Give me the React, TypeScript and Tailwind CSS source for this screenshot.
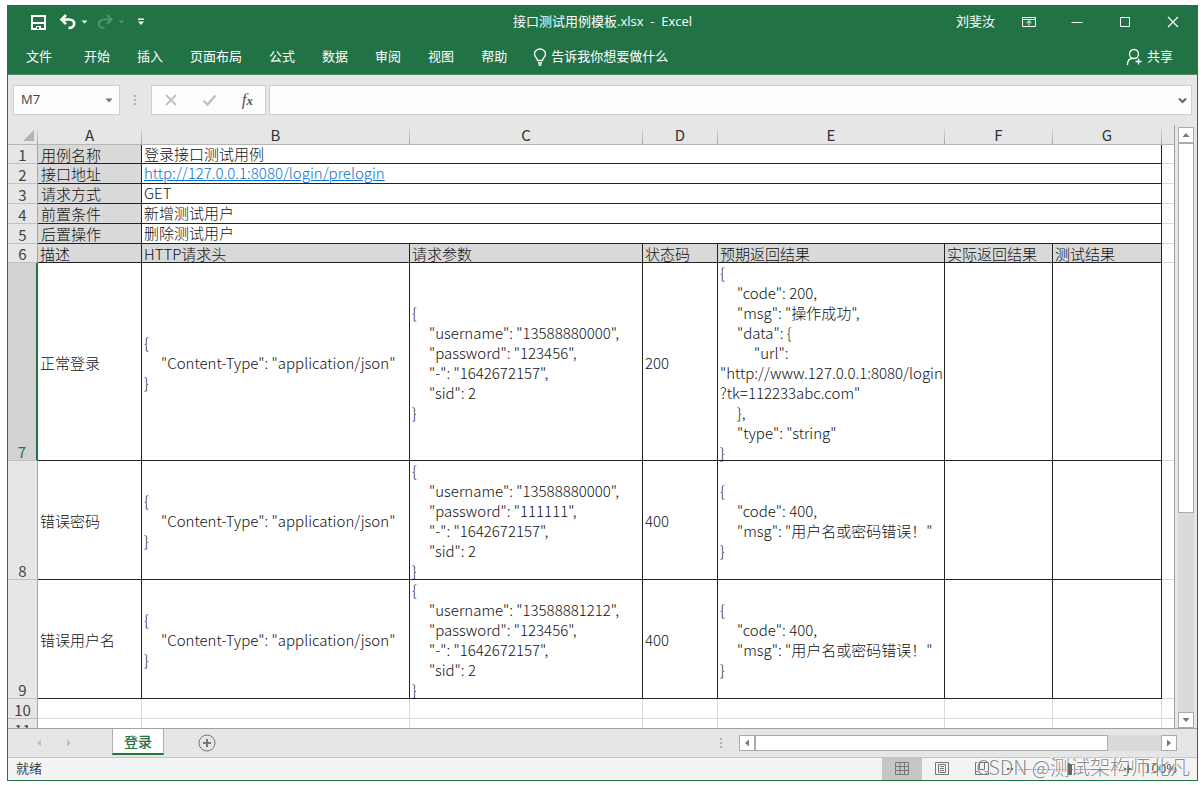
import type { ReactNode } from 'react';

const menus = ['开始', '插入', '页面布局', '公式', '数据', '审阅', '视图', '帮助'];

const columns = ['A', 'B', 'C', 'D', 'E', 'F', 'G'];

const info = [
  { label: '用例名称', value: '登录接口测试用例' },
  { label: '接口地址', value: 'http://127.0.0.1:8080/login/prelogin', link: true },
  { label: '请求方式', value: 'GET' },
  { label: '前置条件', value: '新增测试用户' },
  { label: '后置操作', value: '删除测试用户' },
];

const headings = ['描述', 'HTTP请求头', '请求参数', '状态码', '预期返回结果', '实际返回结果', '测试结果'];

const header = '{\n\t"Content-Type": "application/json"\n}';

const params = (user: string, pwd: string) =>
  `{\n\t"username": "${user}",\n\t"password": "${pwd}",\n\t"-": "1642672157",\n\t"sid": 2\n}`;

const failed = '{\n\t"code": 400,\n\t"msg": "用户名或密码错误！"\n}';

const cases = [
  {
    row: 7,
    height: 'h-[197px]',
    active: true,
    cells: [
      '正常登录',
      header,
      params('13588880000', '123456'),
      '200',
      '{\n\t"code": 200,\n\t"msg": "操作成功",\n\t"data": {\n\t\t"url":\n"http://www.127.0.0.1:8080/login\n?tk=112233abc.com"\n\t},\n\t"type": "string"\n}',
      '',
      '',
    ],
  },
  {
    row: 8,
    height: 'h-[118px]',
    active: false,
    cells: ['错误密码', header, params('13588880000', '111111'), '400', failed, '', ''],
  },
  {
    row: 9,
    height: 'h-[118px]',
    active: false,
    cells: ['错误用户名', header, params('13588881212', '123456'), '400', failed, '', ''],
  },
];

function RowHead({ n, active }: { n: number; active?: boolean }) {
  return (
    <th
      scope="row"
      className={
        active
          ? 'border-r-2 border-b border-r-[#217346] border-b-[#c0c0c0] bg-[#d2d2d2] p-0 text-center align-bottom font-normal text-[#217346]'
          : 'border-r border-b border-r-[#a6a6a6] border-b-[#c0c0c0] bg-[#e6e6e6] p-0 text-center align-bottom font-normal text-[#444]'
      }
    >
      <div className="h-[18px] leading-[20px]">{n}</div>
    </th>
  );
}

function Edge() {
  return <td className="border-b border-[#d9d9d9] p-0" />;
}

function Dots() {
  return (
    <svg width="3" height="13" viewBox="0 0 3 13" fill="#b0b0b0" aria-hidden="true">
      <path d="M0 1h2v2H0zM0 5h2v2H0zM0 9h2v2H0z" />
    </svg>
  );
}

function ScrollButton({ label, d }: { label: string; d: string }) {
  return (
    <button aria-label={label} className="flex size-4 shrink-0 items-center justify-center border border-[#ababab] bg-white">
      <svg width="8" height="8" viewBox="0 0 8 8" fill="#777">
        <path d={d} />
      </svg>
    </button>
  );
}

function WindowButton({ label, children }: { label: string; children: ReactNode }) {
  return (
    <button aria-label={label} className="flex h-8 w-12 items-center justify-center">
      <svg width="16" height="16" viewBox="0 0 16 16" fill="none" stroke="#fff">
        {children}
      </svg>
    </button>
  );
}

function TitleBar() {
  return (
    <div className="grid h-[34px] grid-cols-[1fr_auto_1fr] items-center">
      <div className="flex items-center pl-[22px]">
        <button aria-label="保存">
          <svg width="17" height="17" viewBox="0 0 17 17" fill="none" stroke="#fff" strokeWidth="2">
            <path d="M2 2h13v13H2z" />
            <path d="M2 9h13" />
            <path d="M6 12h5v3H6z" fill="#fff" stroke="none" />
            <path d="M7 13h2v2H7z" fill="#217346" stroke="none" />
          </svg>
        </button>
        <button aria-label="撤消" className="ml-3 flex items-center gap-1">
          <svg width="18" height="16" viewBox="0 0 18 16" fill="none" stroke="#fff" strokeWidth="2.6">
            <path d="M7 1L2.500 5.500L7 10M3 5.500H10C17 5.500 17 14 9.500 14" />
          </svg>
          <svg width="7" height="4" viewBox="0 0 7 4" fill="#fff">
            <path d="M0.500 0.500h6L3.500 3.500z" />
          </svg>
        </button>
        <button aria-label="恢复" className="ml-2 flex items-center gap-1" disabled>
          <svg width="18" height="16" viewBox="0 0 18 16" fill="none" stroke="#4f9170" strokeWidth="2.200">
            <path d="M11 1L15.500 5.500L11 10M15 5.500H8C1 5.500 1 14 8.500 14" />
          </svg>
          <svg width="7" height="4" viewBox="0 0 7 4" fill="#4f9170">
            <path d="M0.500 0.500h6L3.500 3.500z" />
          </svg>
        </button>
        <button aria-label="自定义快速访问工具栏" className="ml-3">
          <svg width="8" height="8" viewBox="0 0 8 8" fill="#fff">
            <path d="M1 0.500h6v1.500H1zM1 3.500h6L4 7z" />
          </svg>
        </button>
      </div>
      <h1 className="text-[13px] whitespace-pre">接口测试用例模板.xlsx  -  Excel</h1>
      <div className="flex items-center justify-end">
        <button className="mr-[10px] text-[13px]">刘斐汝</button>
        <WindowButton label="功能区显示选项">
          <path d="M1.500 3.500h13v9h-13zM1.500 5.500h13M8 11.500V7M5.500 9L8 6.800L10.500 9" />
        </WindowButton>
        <WindowButton label="最小化">
          <path d="M2.500 8.500h11" />
        </WindowButton>
        <WindowButton label="最大化">
          <path d="M3.500 3.500h9v9h-9z" />
        </WindowButton>
        <WindowButton label="关闭">
          <path d="M3 3l10 10M13 3L3 13" strokeWidth="1.200" />
        </WindowButton>
      </div>
    </div>
  );
}

function MenuBar() {
  return (
    <nav className="flex h-9 items-center border-b border-[#4d8f6b] px-[18px] text-[13px]">
      <button className="mr-8">文件</button>
      <div className="flex gap-[27px]">
        {menus.map((m) => (
          <button key={m} className="whitespace-nowrap">
            {m}
          </button>
        ))}
      </div>
      <button className="ml-[26px] flex items-center gap-1 whitespace-nowrap">
        <svg width="14" height="18" viewBox="0 0 14 18" fill="none" stroke="#fff" strokeWidth="1.300">
          <path d="M4.500 12.500C4.500 10 1.500 9 1.500 6a5.500 5 0 0 1 11 0C12.500 9 9.500 10 9.500 12.500zM5 15h4M5.500 17h3" />
        </svg>
        告诉我你想要做什么
      </button>
      <button className="mr-1.5 ml-auto flex items-center gap-1 whitespace-nowrap">
        <svg width="17" height="18" viewBox="0 0 17 18" fill="none" stroke="#fff" strokeWidth="1.300">
          <circle cx="8" cy="6" r="4.500" />
          <path d="M1.500 17C1.500 13 3.500 10.500 6.500 10.500M12.500 10.500v6M9.500 13.500h6" />
        </svg>
        共享
      </button>
    </nav>
  );
}

function FormulaBar() {
  return (
    <div className="flex h-[50px] items-start bg-[#e6e6e6] px-[5px] pt-[10px] text-[#444]">
      <div className="flex h-[30px] w-[107px] items-center border border-[#cfcfcf] bg-[#fdfdfd] pr-1.5 pl-[7px]">
        <input aria-label="名称框" defaultValue="M7" className="w-0 flex-1 bg-transparent text-[13px] outline-none" />
        <button aria-label="名称列表">
          <svg width="8" height="5" viewBox="0 0 8 5" fill="#777">
            <path d="M0.500 0.500h7L4 4.500z" />
          </svg>
        </button>
      </div>
      <div className="flex h-[30px] w-[31px] items-center justify-center">
        <Dots />
      </div>
      <div className="flex h-[30px] w-[115px] items-center justify-between border border-[#cfcfcf] bg-[#fdfdfd] px-3">
        <button aria-label="取消">
          <svg width="14" height="14" viewBox="0 0 14 14" stroke="#c0c0c0" strokeWidth="1.800">
            <path d="M2 2l10 10M12 2L2 12" />
          </svg>
        </button>
        <button aria-label="输入">
          <svg width="15" height="14" viewBox="0 0 15 14" fill="none" stroke="#c0c0c0" strokeWidth="2.400">
            <path d="M1.500 7.500l4 4L13.500 2.500" />
          </svg>
        </button>
        <button aria-label="插入函数" className="font-['Liberation_Serif',serif] text-[17px] leading-5 text-[#555] italic">
          f<span className="text-[13px] font-bold">x</span>
        </button>
      </div>
      <div className="ml-[3px] flex h-[30px] flex-1 items-center border border-[#cfcfcf] bg-[#fdfdfd] pr-1">
        <input aria-label="编辑栏" className="h-full min-w-0 flex-1 bg-transparent px-1 text-[13px] outline-none" />
        <button aria-label="展开编辑栏">
          <svg width="9" height="7" viewBox="0 0 9 7" fill="none" stroke="#666" strokeWidth="2">
            <path d="M1 1.500l3.500 3.500L8 1.500" />
          </svg>
        </button>
      </div>
    </div>
  );
}

function Grid() {
  return (
    <div className="min-w-0 flex-1 overflow-hidden border-r border-[#a0a0a0] bg-white">
      <table className="w-full table-fixed border-separate border-spacing-0 text-left font-['Noto_Sans_CJK_SC',sans-serif] text-[15px] leading-5 font-light text-[#111]">
        <colgroup>
          <col className="w-[30px]" />
          <col className="w-[104px]" />
          <col className="w-[268px]" />
          <col className="w-[233px]" />
          <col className="w-[75px]" />
          <col className="w-[227px]" />
          <col className="w-[108px]" />
          <col className="w-[109px]" />
          <col />
        </colgroup>
        <thead>
          <tr className="bg-[#e6e6e6] text-center text-[#333]">
            <td className="border-b border-[#b5b5b5] p-0">
              <div className="flex h-[19px] justify-end">
                <svg width="14" height="19" viewBox="0 0 14 19" fill="#b4b4b4">
                  <path d="M11 5v11H0z" />
                </svg>
                <span className="h-full w-px bg-linear-to-b from-[#e6e6e6] to-[#a6a6a6]" />
              </div>
            </td>
            {columns.map((c) => (
              <th key={c} scope="col" className="border-b border-[#b5b5b5] p-0 font-normal">
                <div className="flex h-[19px]">
                  <span className="flex-1 leading-5">{c}</span>
                  <span className="h-full w-px bg-linear-to-b from-[#e6e6e6] to-[#a6a6a6]" />
                </div>
              </th>
            ))}
            <td className="border-b border-[#b5b5b5] p-0" />
          </tr>
        </thead>
        <tbody>
          {info.map((item, i) => (
            <tr key={item.label}>
              <RowHead n={i + 1} />
              <td className="border-r border-b border-[#222] bg-[#d9d9d9] p-0 pl-[3px]">
                <div className={i === 0 ? 'h-[18px]' : 'h-[19px]'}>{item.label}</div>
              </td>
              <td colSpan={6} className="border-r border-b border-[#222] p-0 pl-0.5 leading-[18px]">
                <div className={i === 0 ? 'h-[18px]' : 'h-[19px]'}>
                  {item.link ? (
                    <a href={item.value} className="text-[#0d6fd0] underline">
                      {item.value}
                    </a>
                  ) : (
                    item.value
                  )}
                </div>
              </td>
              <Edge />
            </tr>
          ))}
          <tr>
            <RowHead n={6} />
            {headings.map((h) => (
              <td key={h} className="border-r border-b border-[#222] bg-[#d9d9d9] p-0 pl-0.5 whitespace-nowrap">
                <div className="h-[18px]">{h}</div>
              </td>
            ))}
            <Edge />
          </tr>
          {cases.map((c) => (
            <tr key={c.row}>
              <RowHead n={c.row} active={c.active} />
              {c.cells.map((text, i) => (
                <td key={i} className="border-r border-b border-[#222] p-0 pl-0.5">
                  <div className={`${c.height} flex items-center pt-0.5`}>
                    <span className="[tab-size:17px] whitespace-pre">{text}</span>
                  </div>
                </td>
              ))}
              <Edge />
            </tr>
          ))}
          {[10, 11].map((n) => (
            <tr key={n}>
              <RowHead n={n} />
              {columns.map((c) => (
                <td key={c} className="h-5 border-r border-b border-[#d9d9d9] p-0" />
              ))}
              <Edge />
            </tr>
          ))}
        </tbody>
      </table>
    </div>
  );
}

function VerticalScroll() {
  return (
    <div className="flex w-[22px] shrink-0 flex-col bg-[#e6e6e6] pt-0.5 pr-[3px] pl-[3px]">
      <ScrollButton label="向上滚动" d="M0.500 6h7L4 2z" />
      <div className="min-h-0 flex-1 bg-[#dadada]">
        <div className="h-[65%] border border-[#ababab] bg-white" />
      </div>
      <ScrollButton label="向下滚动" d="M0.500 2h7L4 6z" />
    </div>
  );
}

function SheetTabs() {
  return (
    <div className="flex h-[29px] shrink-0 items-start border-t border-[#a0a0a0] bg-[#e6e6e6]">
      <div className="flex h-7 w-[104px] items-center gap-[22px] pl-[27px]">
        <button aria-label="上一个工作表">
          <svg width="8" height="8" viewBox="0 0 8 8" fill="#c0c0c0">
            <path d="M6 0.500v7L2 4z" />
          </svg>
        </button>
        <button aria-label="下一个工作表">
          <svg width="8" height="8" viewBox="0 0 8 8" fill="#c0c0c0">
            <path d="M2 0.500v7L6 4z" />
          </svg>
        </button>
      </div>
      <button className="h-[26px] w-[52px] border-r border-b-2 border-l border-x-[#b0b0b0] border-b-[#217346] bg-white text-[14px] font-medium text-[#217346]">
        登录
      </button>
      <button aria-label="新工作表" className="mt-[5px] ml-[34px]">
        <svg width="18" height="18" viewBox="0 0 18 18" fill="none" stroke="#777">
          <circle cx="9" cy="9" r="8" />
          <path d="M9 5v8M5 9h8" strokeWidth="2" />
        </svg>
      </button>
      <div className="mr-4 ml-auto flex h-7 items-center">
        <Dots />
      </div>
      <div className="mt-1.5 mr-5 flex w-[438px]">
        <ScrollButton label="向左滚动" d="M6 0.500v7L2 4z" />
        <div className="flex-1 bg-[#dadada]">
          <div className="h-4 w-[87%] border border-[#ababab] bg-white" />
        </div>
        <ScrollButton label="向右滚动" d="M2 0.500v7L6 4z" />
      </div>
    </div>
  );
}

function StatusBar() {
  return (
    <div className="relative flex h-[23px] shrink-0 items-center border-t border-[#c6c6c6] bg-[#f3f3f3] pl-2 text-[13px] text-[#444]">
      <span>就绪</span>
      <button aria-label="普通视图" className="ml-auto flex h-full w-10 items-center justify-center bg-[#c6c6c6]">
        <svg width="15" height="14" viewBox="0 0 15 14" fill="none" stroke="#777">
          <path d="M0.500 0.500h13v12h-13zM0.500 4.500h13M0.500 8.500h13M5 0.500v12M9.500 0.500v12" />
        </svg>
      </button>
      <button aria-label="页面布局" className="flex w-10 items-center justify-center">
        <svg width="15" height="14" viewBox="0 0 15 14" fill="none" stroke="#777">
          <path d="M0.500 0.500h13v12h-13zM3.500 2.500h7v8h-7zM5 4.500h4M5 6.500h4M5 8.500h4" />
        </svg>
      </button>
      <button aria-label="分页预览" className="flex w-10 items-center justify-center">
        <svg width="15" height="14" viewBox="0 0 15 14" fill="none" stroke="#777">
          <path d="M0.500 0.500h13v12h-13zM4.500 0.500v7h5v-7M0.500 9.500h4M9.500 9.500h4" />
        </svg>
      </button>
      <button aria-label="缩小" className="flex w-4 justify-center">
        <svg width="8" height="8" viewBox="0 0 8 8" stroke="#666" strokeWidth="2">
          <path d="M1 4h6" />
        </svg>
      </button>
      <input
        type="range"
        aria-label="显示比例"
        defaultValue="50"
        className="h-4 w-[102px] appearance-none bg-[linear-gradient(#aaa,#aaa)] bg-[length:100%_1px] bg-center bg-no-repeat [&::-webkit-slider-thumb]:h-3 [&::-webkit-slider-thumb]:w-[5px] [&::-webkit-slider-thumb]:appearance-none [&::-webkit-slider-thumb]:bg-[#666]"
      />
      <button aria-label="放大" className="flex w-4 justify-center">
        <svg width="8" height="8" viewBox="0 0 8 8" stroke="#666" strokeWidth="2">
          <path d="M0 4h8M4 0v8" />
        </svg>
      </button>
      <span className="mr-5 ml-2 w-[33px]">100%</span>
      <div className="pointer-events-none absolute right-[7px] -bottom-px font-['Noto_Sans_CJK_SC',sans-serif] text-[20px] leading-7 font-light whitespace-nowrap text-[#7c7c7c]/90 [text-shadow:-1px_-1px_0_#fff]">
        CSDN @测试架构师北凡
      </div>
    </div>
  );
}

export default function App() {
  return (
    <div className="h-screen bg-white pt-[5px] pr-1.5 pb-1 pl-[7px] font-['Open_Sans','Noto_Sans_CJK_SC',sans-serif]">
      <div className="flex h-full flex-col overflow-hidden border-x border-b border-[#217346]">
        <header className="shrink-0 bg-[#217346] text-white">
          <TitleBar />
          <MenuBar />
        </header>
        <FormulaBar />
        <main className="flex min-h-0 flex-1">
          <Grid />
          <VerticalScroll />
        </main>
        <SheetTabs />
        <StatusBar />
      </div>
    </div>
  );
}
